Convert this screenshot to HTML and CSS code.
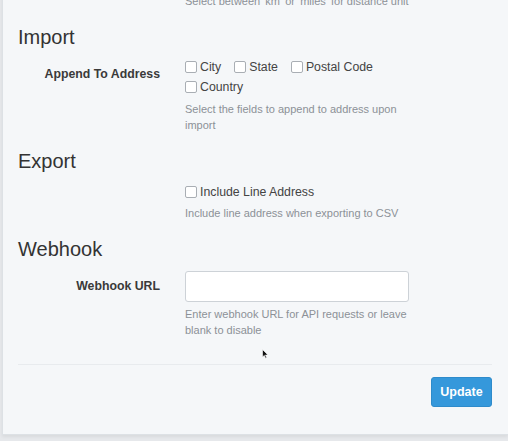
FILE: index.html
```html
<!DOCTYPE html>
<html lang="en">
<head>
<meta charset="utf-8">
<title>Settings</title>
<link rel="stylesheet" href="styles.css">
</head>
<body>
<div class="card">
  <p class="help help-top">Select between 'km' or 'miles' for distance unit</p>

  <h2 class="section-title">Import</h2>
  <div class="row">
    <div class="label label-check">Append To Address</div>
    <div class="field">
      <div class="checks">
        <label class="check"><span class="box"></span>City</label>
        <label class="check"><span class="box"></span>State</label>
        <label class="check"><span class="box"></span>Postal Code</label>
        <label class="check"><span class="box"></span>Country</label>
      </div>
      <p class="help">Select the fields to append to address upon import</p>
    </div>
  </div>

  <h2 class="section-title">Export</h2>
  <div class="row row-export">
    <div class="label"></div>
    <div class="field">
      <div class="checks">
        <label class="check"><span class="box"></span>Include Line Address</label>
      </div>
      <p class="help help-tight">Include line address when exporting to CSV</p>
    </div>
  </div>

  <h2 class="section-title">Webhook</h2>
  <div class="row row-webhook">
    <div class="label label-input">Webhook URL</div>
    <div class="field">
      <div class="input"></div>
      <p class="help">Enter webhook URL for API requests or leave blank to disable</p>
    </div>
  </div>

  <div class="footer">
    <button class="btn">Update</button>
  </div>

  <svg class="cursor" width="7" height="10" viewBox="0 0 7 10"><path d="M0.5 0.5 L0.5 8 L2.3 6.4 L3.6 9.3 L4.7 8.8 L3.5 6 L6 6 Z" fill="#111" stroke="#fff" stroke-width="0.6"/></svg>
</div>
</body>
</html>
```
FILE: styles.css
```css
html, body {
  margin: 0;
  padding: 0;
}
body {
  background: #e6e8eb;
  font-family: "Liberation Sans", Arial, sans-serif;
  color: #333;
  overflow: hidden;
  height: 441px;
}
.card {
  position: relative;
  margin: -7px 0 0 2px;
  padding: 0 16px 27px 15px;
  background: #f5f7f9;
  border-left: 1px solid #dde1e5;
  border-bottom: 1px solid #dde1e5;
  box-shadow: 0 2px 3px rgba(0,0,0,0.06);
}
.help {
  margin: 4px 0 0 0;
  font-size: 11px;
  line-height: 16px;
  color: #8c9197;
  width: 224px;
}
.help-top {
  margin: 0 0 0 167px;
  width: 300px;
}
.help-tight {
  margin-top: 3px;
}
.section-title {
  margin: 16px 0 0 0;
  font-size: 20px;
  line-height: 24px;
  font-weight: 400;
  color: #333;
}
.row {
  display: grid;
  grid-template-columns: 142px 1fr;
  column-gap: 25px;
  margin-top: 8px;
}
.row-export {
  margin-top: 9px;
}
.row-webhook {
  margin-top: 10px;
}
.label {
  text-align: right;
  font-size: 12.3px;
  line-height: 20px;
  font-weight: 700;
  color: #3a3a3a;
}
.label-check {
  padding-top: 7px;
}
.label-input {
  padding-top: 5px;
}
.checks {
  display: flex;
  flex-wrap: wrap;
  width: 224px;
  column-gap: 13px;
}
.check {
  display: flex;
  align-items: center;
  gap: 3px;
  font-size: 12.3px;
  line-height: 20px;
  color: #444;
}
.box {
  width: 10px;
  height: 10px;
  border: 1px solid #a9aeb4;
  border-radius: 2px;
  background: #fff;
}
.input {
  width: 222px;
  height: 29px;
  border: 1px solid #cdd2d7;
  border-radius: 3px;
  background: #fff;
}
.footer {
  margin-top: 26px;
  border-top: 1px solid #e8ebee;
  padding-top: 12px;
  display: flex;
  justify-content: flex-end;
}
.btn {
  width: 61px;
  height: 30px;
  background: #3598db;
  border: 1px solid #2e8bcb;
  border-radius: 3px;
  color: #fff;
  font-family: "Liberation Sans", Arial, sans-serif;
  font-size: 12.5px;
  font-weight: 700;
  padding: 0;
}
.cursor {
  position: absolute;
  left: 259px;
  top: 356px;
}
```
